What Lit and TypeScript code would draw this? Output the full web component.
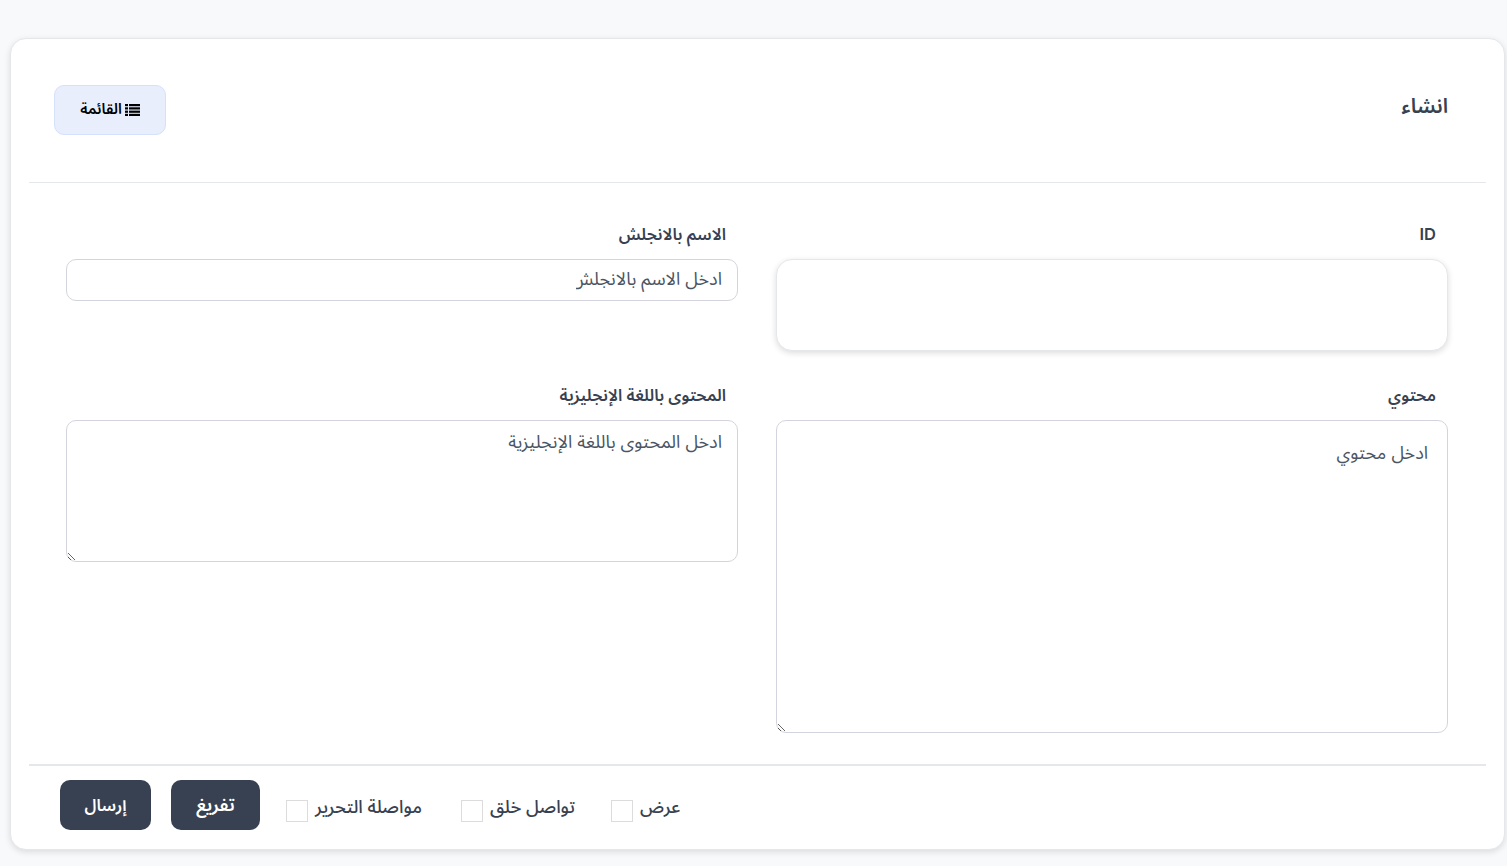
import { LitElement, html, css } from "lit";
import { customElement } from "lit/decorators.js";

@customElement("app-root")
export class AppRoot extends LitElement {
  static styles = css`
    :host { display: block; height: 866px; box-sizing: border-box; background: #f8f9fb; padding: 38px 2px 16px 10px; font-family: Inter, "Noto Sans", "Noto Sans Arabic", "DejaVu Sans", sans-serif; color: #374151; overflow: hidden; }
    * { box-sizing: border-box; font-family: inherit; }
    .card { height: 812px; background: #fff; border: 1px solid #e5e7eb; border-radius: 16px; box-shadow: 0 2px 6px rgba(0,0,0,.12); padding: 0 18px; display: flex; flex-direction: column; }
    .head { height: 144px; flex: none; border-bottom: 1px solid #e5e7eb; display: flex; justify-content: space-between; align-items: center; padding: 0 38px 0 25px; }
    h1 { margin: 0 0 8px; font-size: 20.5px; font-weight: 600; color: #374151; }
    .list { width: 112px; height: 50px; margin-top: -2px; display: flex; align-items: center; justify-content: center; gap: 3px; background: #e8eefc; border: 1px solid #d5e0fa; border-radius: 10px; color: #000; font-size: 14.8px; font-weight: 600; padding: 0; }
    .list svg { width: 15px; height: 12px; flex: none; }
    .grid { flex: 1; display: grid; grid-template-columns: 672px 672px; column-gap: 38px; grid-template-rows: 161px 1fr; padding: 36px 38px 0 38px; align-content: start; }
    .field { display: flex; flex-direction: column; align-items: stretch; }
    label.t { height: 40px; flex: none; padding: 0 12px; font-size: 16.5px; font-weight: 600; color: #374151; line-height: 30px; }
    input.text, textarea { display: block; width: 672px; background: #fff; border: 1px solid #d4d4de; border-radius: 10px; font-size: 18px; color: #374151; outline: none; margin: 0; }
    input.text::placeholder, textarea::placeholder { color: #4b5563; opacity: 1; }
    .id { height: 92px !important; border-color: #e5e7eb !important; border-radius: 16px !important; box-shadow: 0 2px 6px rgba(0,0,0,.14); }
    .name { height: 42px; padding: 0 15px 3px 509px; }
    .en { height: 142px; padding: 2px 15px; resize: both; }
    .ar { height: 313px; padding: 13px 19px; resize: both; }
    .foot { height: 85px; flex: none; border-top: 2px solid #e5e7eb; display: flex; align-items: center; justify-content: flex-end; padding: 0 31px 5px 31px; }
    .check { display: flex; align-items: center; gap: 7px; margin: 4px 0 0 39px; font-size: 18px; font-weight: 500; color: #374151; }
    .check i { display: block; width: 22px; height: 22px; border: 1px solid #dcdcdc; margin-top: 8px; background: #fff; }
    .check.first { margin-left: 36px; }
    .check.last { margin-left: 26px; }
    button.action { height: 50px; border: none; border-radius: 10px; background: #374151; color: #fff; font-size: 18px; font-weight: 600; padding: 0; }
    .clear { width: 89px; margin-left: 20px; }
    button.send { width: 91px; font-size: 16.5px; }
  `;

  render() {
    return html`<div class="card" dir="rtl">
      <div class="head">
        <h1>انشاء</h1>
        <button class="list">
          <svg viewBox="0 0 15 12" fill="#000" aria-hidden="true">
            <rect x="0" y="0" width="3" height="2.2"/><rect x="4" y="0" width="11" height="2.2"/>
            <rect x="0" y="3.3" width="3" height="2.2"/><rect x="4" y="3.3" width="11" height="2.2"/>
            <rect x="0" y="6.6" width="3" height="2.2"/><rect x="4" y="6.6" width="11" height="2.2"/>
            <rect x="0" y="9.8" width="3" height="2.2"/><rect x="4" y="9.8" width="11" height="2.2"/>
          </svg>
          <span>القائمة</span>
        </button>
      </div>
      <div class="grid">
        <div class="field"><label class="t">ID</label><input class="text id" type="text" /></div>
        <div class="field"><label class="t">الاسم بالانجلش</label><input class="text name" type="text" placeholder="ادخل الاسم بالانجلش" /></div>
        <div class="field"><label class="t">محتوي</label><textarea class="ar" placeholder="ادخل محتوي"></textarea></div>
        <div class="field"><label class="t">المحتوى باللغة الإنجليزية</label><textarea class="en" placeholder="ادخل المحتوى باللغة الإنجليزية"></textarea></div>
      </div>
      <div class="foot">
        <label class="check first"><span>عرض</span><i></i></label>
        <label class="check"><span>تواصل خلق</span><i></i></label>
        <label class="check last"><span>مواصلة التحرير</span><i></i></label>
        <button class="action clear">تفريغ</button>
        <button class="action send">إرسال</button>
      </div>
    </div>`;
  }
}
